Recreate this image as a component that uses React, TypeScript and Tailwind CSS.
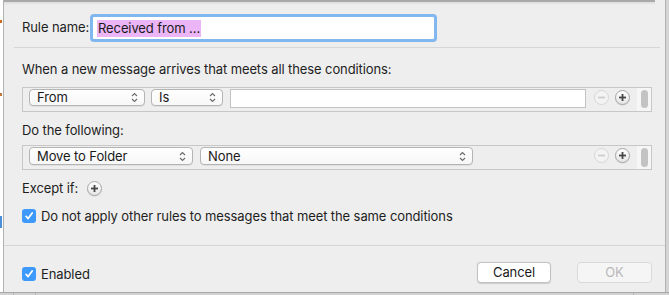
import React from 'react'

const Chevrons: React.FC = () => (
  <svg width="7" height="11" viewBox="0 0 7 11" fill="none" stroke="#6b6b6b" strokeWidth="1.1">
    <path d="M1 4 L3.5 1.5 L6 4" />
    <path d="M1 7 L3.5 9.5 L6 7" />
  </svg>
)

const Popup: React.FC<{ label: string; width: string; height: string }> = ({ label, width, height }) => (
  <div
    className={`${width} ${height} flex items-center justify-between pl-[7px] pr-[6px] rounded-[4px] border border-[#b4b4b4] bg-gradient-to-b from-white to-[#f7f7f7] shadow-[0_0.5px_0.5px_rgba(0,0,0,0.12)]`}
  >
    <span className="text-[13px] text-[#1a1a1a] leading-none">{label}</span>
    <Chevrons />
  </div>
)

const RoundButton: React.FC<{ kind: 'plus' | 'minus'; disabled?: boolean }> = ({ kind, disabled }) => (
  <div
    className={`w-[15px] h-[15px] rounded-full border flex items-center justify-center shrink-0 ${
      disabled
        ? 'border-[#d6d6d6] bg-[#f3f3f3]'
        : 'border-[#a6a6a6] bg-gradient-to-b from-white to-[#e6e6e6] shadow-[0_0.5px_0.5px_rgba(0,0,0,0.15)]'
    }`}
  >
    <svg width="9" height="9" viewBox="0 0 9 9" stroke={disabled ? '#cdcdcd' : '#474747'} strokeWidth="1.8">
      <path d="M1 4.5 H8" />
      {kind === 'plus' && <path d="M4.5 1 V8" />}
    </svg>
  </div>
)

const Check: React.FC = () => (
  <div className="w-[14px] h-[14px] rounded-[3px] bg-[#3d99fb] flex items-center justify-center shrink-0">
    <svg width="10" height="10" viewBox="0 0 10 10" fill="none" stroke="white" strokeWidth="1.7" strokeLinecap="round" strokeLinejoin="round">
      <path d="M2 5.3 L4.1 7.6 L8.2 2" />
    </svg>
  </div>
)

const RowControls: React.FC<{ thumb: string }> = ({ thumb }) => (
  <div className="ml-auto flex items-start self-stretch">
    <div className="mt-[2px]">
      <RoundButton kind="minus" disabled />
    </div>
    <div className="mt-[2px] ml-[6px]">
      <RoundButton kind="plus" />
    </div>
    <div className="ml-[7px] self-stretch flex">
      <div className="w-[14px] bg-[#f6f6f6] flex justify-center pt-[2px]">
        <div className={`w-[7px] ${thumb} rounded-full bg-[#c3c3c3]`} />
      </div>
    </div>
  </div>
)

const App: React.FC = () => {
  return (
    <div
      className="w-[669px] h-[295px] bg-[#cfcfcf] flex flex-col overflow-hidden tracking-[-0.1px]"
      style={{ fontFamily: 'Inter, "Liberation Sans", sans-serif' }}
    >
      <div className="flex h-[292px]">
        <div className="w-[3px] bg-white flex flex-col">
          <div className="h-[20px]" />
          <div className="h-[3px] w-[2px] bg-[#d2691e]" />
          <div className="h-[70px]" />
          <div className="h-[3px] w-[2px] bg-[#c0783c]" />
          <div className="h-[120px]" />
          <div className="h-[12px] w-[2px] bg-[#4a8fd8]" />
        </div>
        <div className="w-[663px] bg-[#eeeeee] border-l border-r border-[#b2b2b2] flex flex-col text-[#1e1e1e] relative">
          <div className="absolute top-0 left-0 right-[10px] h-[2px] bg-[#a9a9a9]" />
          <div className="absolute top-[2px] left-0 right-[10px] h-[3px] bg-gradient-to-b from-[#dcdcdc] to-transparent" />

          <div className="flex items-center h-[28px] mt-[14px] pl-[18px]">
            <span className="w-[68px] shrink-0 whitespace-nowrap text-[13px]">Rule name:</span>
            <div className="w-[347px] h-[28px] rounded-[4px] border-[3px] border-[#80b7ef] bg-white flex items-center pl-[4px]">
              <span className="text-[13px] leading-[17px] h-[17px] bg-[#ebb5f8] text-[#1a1a1a] px-[1px] whitespace-nowrap">
                Received from ...
              </span>
            </div>
          </div>

          <div className="h-px bg-[#d6d6d6] mt-[5px] ml-[10px] mr-[5px]" />

          <div className="mt-[13px] h-[16px] pl-[18px] text-[13px] leading-[16px] whitespace-nowrap">
            When a new message arrives that meets all these conditions:
          </div>

          <div className="mt-[10px] ml-[18px] w-[630px] h-[25px] border border-[#c7c7c7] flex items-start pl-[6px]">
            <div className="mt-[1px]">
              <Popup label="From" width="w-[116px]" height="h-[17px]" />
            </div>
            <div className="mt-[1px] ml-[6px]">
              <Popup label="Is" width="w-[72px]" height="h-[17px]" />
            </div>
            <div className="mt-[1px] ml-[7px] w-[356px] h-[19px] bg-white border border-[#c3c3c3]" />
            <RowControls thumb="h-[18px]" />
          </div>

          <div className="mt-[10px] h-[16px] pl-[18px] text-[13px] leading-[16px]">Do the following:</div>

          <div className="mt-[7px] ml-[18px] w-[630px] h-[25px] border border-[#c7c7c7] flex items-start pl-[6px]">
            <div className="mt-[1px]">
              <Popup label="Move to Folder" width="w-[164px]" height="h-[18px]" />
            </div>
            <div className="mt-[1px] ml-[7px]">
              <Popup label="None" width="w-[273px]" height="h-[18px]" />
            </div>
            <RowControls thumb="h-[19px]" />
          </div>

          <div className="mt-[10px] h-[16px] pl-[18px] flex items-center">
            <span className="w-[65px] shrink-0 text-[13px] leading-[16px] whitespace-nowrap">Except if:</span>
            <RoundButton kind="plus" />
          </div>

          <div className="mt-[12px] h-[16px] pl-[18px] flex items-center">
            <Check />
            <span className="ml-[5px] text-[13px] leading-[16px] whitespace-nowrap">
              Do not apply other rules to messages that meet the same conditions
            </span>
          </div>

          <div className="h-px bg-[#d6d6d6] mt-[21px]" />

          <div className="mt-[16px] h-[21px] pl-[18px] pr-[13px] flex items-start">
            <div className="mt-[5px] flex items-center">
              <Check />
              <span className="ml-[5px] text-[13px] leading-[14px]">Enabled</span>
            </div>
            <div className="ml-auto flex">
              <div className="w-[74px] h-[21px] rounded-[4px] border border-[#c2c2c2] bg-white shadow-[0_0.5px_1px_rgba(0,0,0,0.15)] flex items-center justify-center text-[13px] text-[#1a1a1a]">
                Cancel
              </div>
              <div className="ml-[26px] w-[75px] h-[21px] rounded-[4px] border border-[#dadada] bg-[#f5f5f5] flex items-center justify-center text-[13px] text-[#b9b9b9]">
                OK
              </div>
            </div>
          </div>
        </div>
        <div className="w-[3px] bg-[#d4d4d4]" />
      </div>
      <div className="h-[1px] bg-[#a8a8a8]" />
      <div className="flex-1 bg-[#d2d2d2] flex">
        <div className="w-[13px]" />
        <div className="w-px bg-[#b5b5b5]" />
        <div className="w-[21px]" />
        <div className="w-px bg-[#b5b5b5]" />
        <div className="w-[597px]" />
        <div className="w-px bg-[#b5b5b5]" />
      </div>
    </div>
  )
}

export default App
